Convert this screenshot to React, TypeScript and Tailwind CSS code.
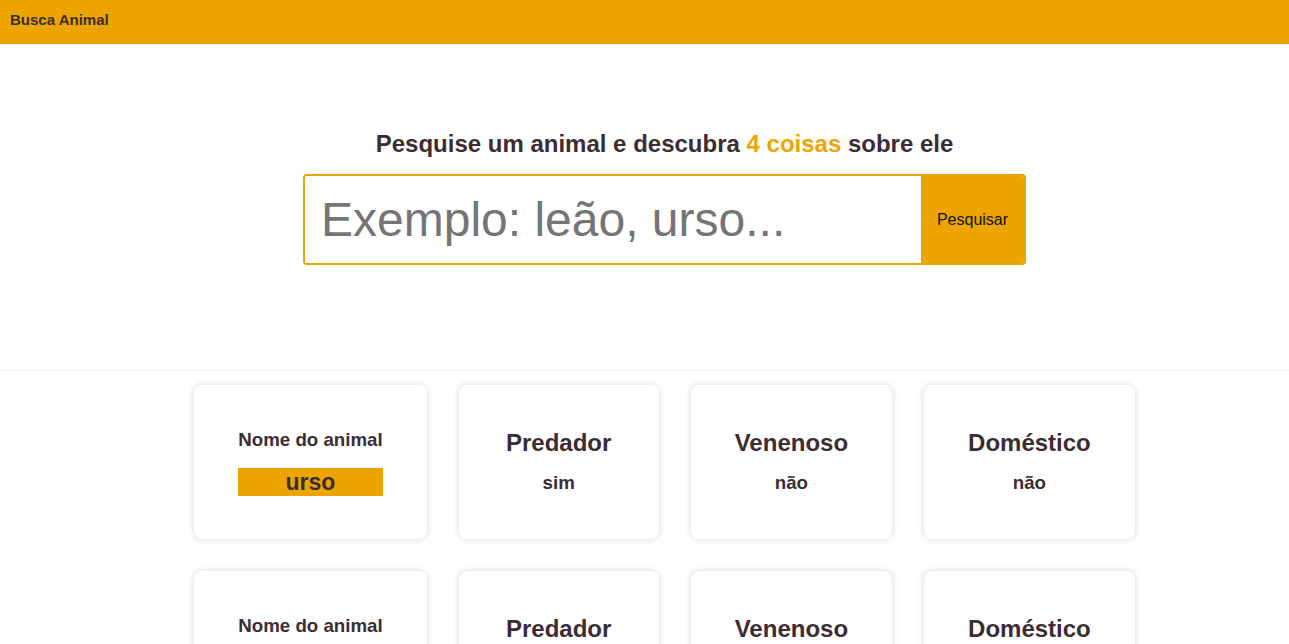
import React from 'react';

interface Animal {
  nome: string;
  predador: string;
  venenoso: string;
  domestico: string;
}

const resultados: Animal[] = [
  { nome: 'urso', predador: 'sim', venenoso: 'não', domestico: 'não' },
  { nome: 'urso', predador: 'sim', venenoso: 'não', domestico: 'não' },
];

function InfoCard({ titulo, valor }: { titulo: string; valor: string }) {
  return (
    <div className="h-[154px] min-w-[200px] px-11 pb-[2px] flex flex-col items-center justify-center gap-4 bg-white rounded-lg shadow-[0_0_7px_rgba(0,0,0,0.16)]">
      <h2 className="text-[24px] font-bold leading-[27px]">{titulo}</h2>
      <p className="text-[18.72px] font-bold leading-[22px]">{valor}</p>
    </div>
  );
}

export default function App() {
  return (
    <div className="min-h-screen bg-white text-[#3b2d33] font-['Liberation_Sans',Arial,sans-serif]">
      <header className="h-[44px] bg-[#eca400] pl-2.5 pt-[11px]">
        <h1 className="text-[15px] font-bold leading-[17px]">Busca Animal</h1>
      </header>

      <main className="pl-10">
        <section className="pt-[86px] pb-[104px] flex flex-col items-center">
          <h2 className="text-[24px] font-bold leading-[28px]">
            Pesquise um animal e descubra <span className="text-[#eca400]">4 coisas</span> sobre ele
          </h2>
          <form
            className="mt-4 w-[723px] h-[91px] flex border-2 border-[#eca400] rounded-[4px] overflow-hidden"
            onSubmit={e => e.preventDefault()}
          >
            <input
              type="text"
              placeholder="Exemplo: leão, urso..."
              className="flex-1 min-w-0 pl-[16px] text-[48px] outline-none placeholder:text-[#757575] bg-white"
            />
            <button
              type="submit"
              className="w-[103px] bg-[#eca400] text-[16px] text-[#111]"
            >
              Pesquisar
            </button>
          </form>
        </section>
      </main>

      <section className="border-t-2 border-[#f8f8f8] pt-[14px] pl-10 flex flex-col items-center gap-8 pb-8">
        {resultados.map((animal, i) => (
          <div key={i} className="flex gap-8">
            <div className="h-[154px] px-11 flex flex-col items-center justify-center bg-white rounded-lg shadow-[0_0_7px_rgba(0,0,0,0.16)]">
              <h3 className="text-[18.72px] font-bold leading-[22px]">Nome do animal</h3>
              <p className="mt-[17px] w-full text-center bg-[#eca400] text-[23px] font-bold leading-[28px]">
                {animal.nome}
              </p>
            </div>
            <InfoCard titulo="Predador" valor={animal.predador} />
            <InfoCard titulo="Venenoso" valor={animal.venenoso} />
            <InfoCard titulo="Doméstico" valor={animal.domestico} />
          </div>
        ))}
      </section>
    </div>
  );
}
